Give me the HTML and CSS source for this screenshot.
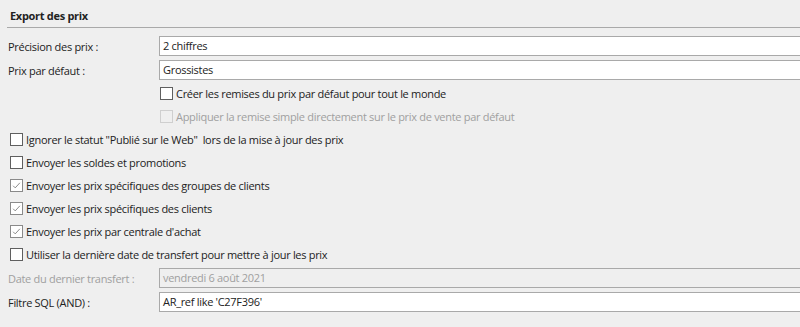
FILE: index.html
```html
<!DOCTYPE html>
<html lang="fr">
<head>
    <meta charset="UTF-8">
    <title>Export des prix</title>
    <link rel="stylesheet" href="styles.css">
</head>
<body>

    <div class="panel">
        <!-- Section title -->
        <div class="section-title">Export des prix</div>

        <div class="form">
            <div class="field">
                <label>Précision des prix :</label>
                <div class="input">2 chiffres</div>
            </div>
            <div class="field">
                <label>Prix par défaut :</label>
                <div class="input">Grossistes</div>
            </div>

            <div class="check indent first">
                <span class="box"></span>
                <span>Créer les remises du prix par défaut pour tout le monde</span>
            </div>
            <div class="check indent disabled">
                <span class="box"></span>
                <span>Appliquer la remise simple directement sur le prix de vente par défaut</span>
            </div>

            <div class="check">
                <span class="box"></span>
                <span>Ignorer le statut "Publié sur le Web"&nbsp; lors de la mise à jour des prix</span>
            </div>
            <div class="check">
                <span class="box"></span>
                <span>Envoyer les soldes et promotions</span>
            </div>
            <div class="check">
                <span class="box checked"><svg viewBox="0 0 13 13"><path d="M2.5 6.8 L5 9.3 L10.5 3.3"/></svg></span>
                <span>Envoyer les prix spécifiques des groupes de clients</span>
            </div>
            <div class="check">
                <span class="box checked"><svg viewBox="0 0 13 13"><path d="M2.5 6.8 L5 9.3 L10.5 3.3"/></svg></span>
                <span>Envoyer les prix spécifiques des clients</span>
            </div>
            <div class="check">
                <span class="box checked"><svg viewBox="0 0 13 13"><path d="M2.5 6.8 L5 9.3 L10.5 3.3"/></svg></span>
                <span>Envoyer les prix par centrale d'achat</span>
            </div>
            <div class="check">
                <span class="box"></span>
                <span>Utiliser la dernière date de transfert pour mettre à jour les prix</span>
            </div>

            <div class="field disabled last-group">
                <label>Date du dernier transfert :</label>
                <div class="input">vendredi 6 août 2021</div>
            </div>
            <div class="field">
                <label>Filtre SQL (AND) :</label>
                <div class="input">AR_ref like 'C27F396'</div>
            </div>
        </div>
    </div>

</body>
</html>
```

FILE: styles.css
```css
/* General Reset */
body, div, label, span {
    margin: 0;
    padding: 0;
}
body {
    background-color: #efefef;
    font-family: "Open Sans", Arial, sans-serif;
    font-size: 11px;
    letter-spacing: -0.3px;
    color: #222;
    overflow: hidden;
}
.panel {
    padding-left: 7px;
}
.section-title {
    height: 28px;
    line-height: 31px;
    padding-left: 3px;
    font-weight: bold;
    border-bottom: 1px solid #a9a9a9;
    box-sizing: border-box;
}
.form {
    display: flex;
    flex-direction: column;
    padding-top: 8px;
}
.field {
    display: flex;
    align-items: center;
    height: 20px;
    margin-bottom: 4px;
}
.field label {
    width: 151px;
    flex-shrink: 0;
    padding-left: 1px;
}
.input {
    flex: 1;
    height: 20px;
    box-sizing: border-box;
    margin-right: -4px;
    padding-left: 3px;
    line-height: 18px;
    background-color: white;
    border: 1px solid #a9a9a9;
}
.field.disabled {
    color: #a0a0a0;
}
.field.disabled .input {
    background-color: #efefef;
}
.field.last-group {
    margin-top: 2px;
}
.check {
    display: flex;
    align-items: center;
    gap: 3px;
    height: 23px;
    padding-left: 3px;
}
.check.indent {
    padding-left: 153px;
}
.check.first {
    margin-top: -2px;
}
.box {
    width: 13px;
    height: 13px;
    box-sizing: border-box;
    border: 1px solid #5f5f5f;
    background-color: white;
    display: flex;
}
.box svg {
    width: 11px;
    height: 11px;
}
.box svg path {
    fill: none;
    stroke: #777;
    stroke-width: 1;
}
.box.checked {
    border-color: #8a8a8a;
}
.check.disabled {
    color: #a0a0a0;
}
.check.disabled .box {
    border-color: #cfcfcf;
    background-color: #efefef;
}
```
